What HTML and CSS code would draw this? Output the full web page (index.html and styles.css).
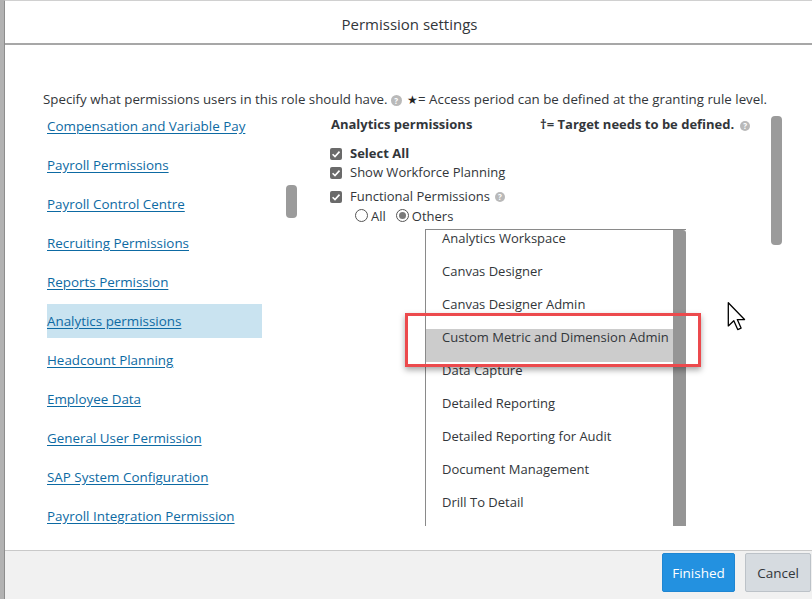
FILE: index.html
```html
<!DOCTYPE html>
<html>
<head>
<meta charset="utf-8">
<link rel="stylesheet" href="styles.css">
</head>
<body>
<div class="dialog">
  <div class="header">Permission settings</div>
  <div class="content">
    <div class="intro">Specify what permissions users in this role should have.<span class="help">?</span> <span class="star">★</span>= Access period can be defined at the granting rule level.</div>
    <div class="columns">
      <div class="leftcol">
        <ul class="nav">
          <li><a href="#">Compensation and Variable Pay</a></li>
          <li><a href="#">Payroll Permissions</a></li>
          <li><a href="#">Payroll Control Centre</a></li>
          <li><a href="#">Recruiting Permissions</a></li>
          <li><a href="#">Reports Permission</a></li>
          <li class="active"><a href="#">Analytics permissions</a></li>
          <li><a href="#">Headcount Planning</a></li>
          <li><a href="#">Employee Data</a></li>
          <li><a href="#">General User Permission</a></li>
          <li><a href="#">SAP System Configuration</a></li>
          <li><a href="#">Payroll Integration Permission</a></li>
        </ul>
        <div class="track"><div class="thumb left-thumb"></div></div>
      </div>
      <div class="rightcol">
        <div class="panel">
          <div class="title-row">
            <span class="title">Analytics permissions</span>
            <span class="legend">†= Target needs to be defined.<span class="help">?</span></span>
          </div>
          <div class="check bold"><span class="box"><svg viewBox="0 0 12 12" width="12" height="12"><path d="M2.6 6.2 L5 8.6 L9.5 3.6" fill="none" stroke="#fff" stroke-width="1.6"/></svg></span>Select All</div>
          <div class="check"><span class="box"><svg viewBox="0 0 12 12" width="12" height="12"><path d="M2.6 6.2 L5 8.6 L9.5 3.6" fill="none" stroke="#fff" stroke-width="1.6"/></svg></span>Show Workforce Planning</div>
          <div class="check gap"><span class="box"><svg viewBox="0 0 12 12" width="12" height="12"><path d="M2.6 6.2 L5 8.6 L9.5 3.6" fill="none" stroke="#fff" stroke-width="1.6"/></svg></span>Functional Permissions<span class="help">?</span></div>
          <div class="radios">
            <span class="radio"></span><span class="rlabel">All</span>
            <span class="radio on"></span><span class="rlabel">Others</span>
          </div>
          <div class="listbox">
            <ul class="items">
              <li>Analytics Workspace</li>
              <li>Canvas Designer</li>
              <li>Canvas Designer Admin</li>
              <li class="hover">Custom Metric and Dimension Admin</li>
              <li>Data Capture</li>
              <li>Detailed Reporting</li>
              <li>Detailed Reporting for Audit</li>
              <li>Document Management</li>
              <li>Drill To Detail</li>
            </ul>
            <div class="lb-scroll"></div>
          </div>
        </div>
        <div class="track"><div class="thumb right-thumb"></div></div>
      </div>
    </div>
  </div>
  <div class="footer">
    <button class="btn primary">Finished</button>
    <button class="btn secondary">Cancel</button>
  </div>
</div>
<div class="annotation"></div>
<svg class="cursor" width="20" height="29" viewBox="0 0 13 20"><path d="M0.5 0.5 L0.5 16.5 L4.3 12.9 L7 19 L9.3 18 L6.7 12.1 L11.7 12.1 Z" fill="#fff" stroke="#000" stroke-width="0.9" stroke-linejoin="round"/></svg>
</body>
</html>
```

FILE: styles.css
```css
* { box-sizing: border-box; }
html, body { margin: 0; padding: 0; }
body {
  width: 812px;
  height: 599px;
  overflow: hidden;
  background: #b2b2b2;
  position: relative;
  font-family: "Open Sans", "Noto Sans", sans-serif;
  font-size: 13px;
  color: #32363a;
}
.dialog {
  margin-left: 4px;
  width: 808px;
  height: 599px;
  background: #fff;
  border-left: 1px solid #8d8d8d;
  border-top: 1px solid #d0d0d0;
  display: flex;
  flex-direction: column;
}
.header {
  height: 44px;
  flex: none;
  border-bottom: 2px solid #a7a7a7;
  text-align: center;
  font-size: 15px;
  line-height: 46px;
  color: #32363a;
  padding-left: 2px;
}
.content {
  flex: 1;
  overflow: hidden;
  padding: 46px 0 0 38px;
}
.intro {
  line-height: 16px;
  height: 18px;
  white-space: nowrap;
  font-size: 13.3px;
}
.help {
  display: inline-block;
  width: 10px;
  height: 10px;
  border-radius: 50%;
  background: #b9b9b9;
  color: #fff;
  font-size: 8px;
  line-height: 10px;
  text-align: center;
  font-weight: 700;
  margin-left: 3px;
  vertical-align: 0px;
}
.intro .help { width: 11px; height: 11px; line-height: 11px; }
.star { font-size: 12px; color: #222; margin-left: 2px; }
.columns {
  display: flex;
  padding-left: 4px;
  gap: 33px;
}
.leftcol {
  display: flex;
  width: 250px;
  gap: 24px;
}
.nav {
  list-style: none;
  margin: 0;
  padding: 0;
  width: 215px;
  flex: none;
}
.nav li {
  height: 34px;
  line-height: 35px;
  margin-bottom: 5px;
}
.nav li.active { background: #c9e3f0; }
.nav a {
  color: #0d6aa3;
  text-decoration: underline;
  text-underline-offset: 2px;
  font-size: 13.4px;
  white-space: nowrap;
}
.track { width: 11px; flex: none; }
.thumb { background: #9b9b9b; border-radius: 4px; width: 11px; }
.left-thumb { margin-top: 76px; height: 33px; }
.right-thumb { margin-top: 7px; height: 129px; }
.rightcol {
  display: flex;
  width: 452px;
}
.panel {
  flex: 1;
  padding-top: 5px;
}
.title-row {
  height: 20px;
  line-height: 20px;
  display: flex;
  font-weight: 700;
  margin-bottom: 10px;
  padding-left: 1px;
}
.title { width: 209px; }
.legend .help { margin-left: 6px; }
.check {
  height: 19px;
  line-height: 19px;
  display: flex;
  align-items: center;
}
.check.bold { font-weight: 700; }
.check.gap { margin-top: 5px; }
.check .help { margin-left: 5px; }
.box {
  width: 12px;
  height: 12px;
  border-radius: 2px;
  background: #6a6a6a;
  margin-right: 8px;
  display: flex;
}
.radios {
  height: 19px;
  display: flex;
  align-items: center;
  padding-left: 25px;
}
.radio {
  width: 13px;
  height: 13px;
  border-radius: 50%;
  border: 1px solid #555;
  margin-right: 3px;
  position: relative;
}
.radio.on::after {
  content: "";
  position: absolute;
  left: 2px; top: 2px;
  width: 7px; height: 7px;
  border-radius: 50%;
  background: #7a7a7a;
}
.rlabel { margin-right: 10px; }
.listbox {
  margin-top: 4px;
  margin-left: 95px;
  width: 261px;
  height: 297px;
  border-left: 1px solid #8a8a8a;
  border-top: 1px solid #8a8a8a;
  display: flex;
}
.items {
  list-style: none;
  margin: 0;
  padding: 0;
  flex: 1;
  overflow: hidden;
}
.items li {
  height: 33px;
  line-height: 16px;
  padding-left: 16px;
  white-space: nowrap;
}
.items li.hover { background: #cccccc; }
.lb-scroll {
  width: 13px;
  background: #959595;
  border-top-right-radius: 3px;
  flex: none;
}
.footer {
  height: 49px;
  flex: none;
  background: #f1f1f1;
  border-top: 1px solid #c9c9c9;
  display: flex;
  justify-content: flex-end;
  align-items: flex-start;
  gap: 10px;
  padding: 2px 1px 0 0;
}
.btn {
  height: 39px;
  font-family: inherit;
  font-size: 13.5px;
  border-radius: 2px;
  padding: 0;
}
.primary {
  width: 73px;
  background: #2391e0;
  color: #fff;
  border: 1px solid #1f86d2;
}
.secondary {
  width: 66px;
  background: #d6dbe0;
  color: #32363a;
  border: 1px solid #bcc2c8;
}
.annotation {
  position: absolute;
  left: 405px;
  top: 313px;
  width: 296px;
  height: 54px;
  border: 3px solid #ec4a4d;
  box-shadow: 0 3px 6px rgba(0,0,0,0.35);
}
.cursor {
  position: absolute;
  left: 727px;
  top: 302px;
}
```
